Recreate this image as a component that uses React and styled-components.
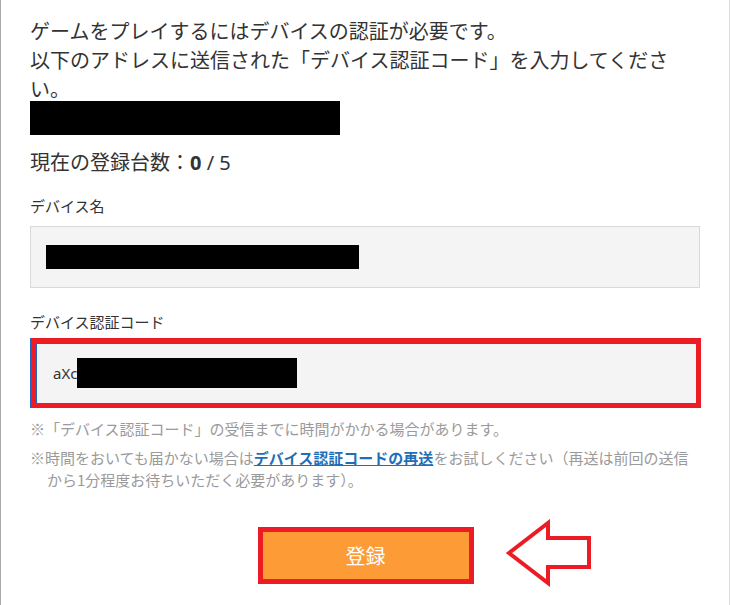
import styled, { createGlobalStyle } from "styled-components";

const GlobalStyle = createGlobalStyle`
    body {
        margin: 0;
        background: #fff;
        font-family: "Noto Sans CJK JP", "Noto Sans", sans-serif;
        color: #333;
    }
`;

const Ventana = styled.div`
    width: 730px;
    height: 605px;
    box-sizing: border-box;
    border-left: 1px solid #a9a9a9;
    border-right: 1px solid #dedede;
    padding: 16px 29px 0 29px;
    overflow: hidden;
`;

const Mensaje = styled.p`
    margin: 0;
    width: 655px;
    font-size: 20px;
    line-height: 29px;
    color: #333;
`;

const Tachado = styled.div`
    width: ${props => props.ancho}px;
    height: ${props => props.alto}px;
    background: #000;
    margin-top: ${props => props.arriba || 0}px;
    flex-shrink: 0;
`;

const Contador = styled.p`
    margin: 12px 0 0;
    font-size: 20px;
    line-height: 29px;
    color: #333;

    b {
        font-family: "Noto Sans", sans-serif;
        font-weight: 700;
    }
    span {
        font-family: "Noto Sans", sans-serif;
    }
`;

const Etiqueta = styled.label`
    display: block;
    font-size: 15px;
    line-height: 22px;
    color: #333;
    margin-top: ${props => props.arriba}px;
`;

const Campo = styled.div`
    box-sizing: border-box;
    display: flex;
    align-items: center;
    background: #f4f4f4;
    margin-top: ${props => props.arriba}px;
    height: ${props => props.resaltado ? 70 : 62}px;
    padding-left: ${props => props.resaltado ? 17 : 15}px;
    border: ${props => props.resaltado ? '5px solid #ed1c24' : '1px solid #d9d9d9'};
    box-shadow: ${props => props.resaltado ? 'inset 1px 1px 0 #1e64c8, -1px 0 0 #1e64c8' : 'none'};
    margin-left: ${props => props.resaltado ? 1 : 0}px;
    margin-right: ${props => props.resaltado ? -1 : 0}px;
    font-family: "Noto Sans", sans-serif;
    font-size: 15px;
    color: #333;
`;

const Notas = styled.div`
    margin-top: 10px;
    display: flex;
    flex-direction: column;
    gap: 7px;
`;

const Nota = styled.p`
    margin: 0;
    font-size: 15px;
    line-height: 22px;
    color: #9a9a9a;
    padding-left: 17px;
    text-indent: -17px;

    a {
        color: #1f6fb8;
        font-weight: 700;
        text-decoration: underline;
    }
`;

const FilaBoton = styled.div`
    display: flex;
    justify-content: center;
    margin-top: 36px;
    padding-left: 1px;
`;

const ContenedorBoton = styled.div`
    position: relative;
`;

const Boton = styled.button`
    box-sizing: border-box;
    width: 216px;
    height: 57px;
    background: #fd9b37;
    border: 5px solid #ed1c24;
    color: #fff;
    font-family: "Noto Sans CJK JP", sans-serif;
    font-size: 20px;
    padding: 0;
    cursor: pointer;
`;

const Flecha = styled.svg`
    position: absolute;
    left: 247px;
    top: -8px;
`;

export default function App() {
    return (
        <>
            <GlobalStyle />
            <Ventana>
                <Mensaje>
                    ゲームをプレイするにはデバイスの認証が必要です。<br />
                    以下のアドレスに送信された「デバイス認証コード」を入力してください。
                </Mensaje>
                <Tachado ancho={310} alto={34} arriba={-2} />

                <Contador>現在の登録台数：<b>0</b><span> / 5</span></Contador>

                <Etiqueta arriba={18}>デバイス名</Etiqueta>
                <Campo arriba={9}>
                    <Tachado ancho={313} alto={24} />
                </Campo>

                <Etiqueta arriba={23}>デバイス認証コード</Etiqueta>
                <Campo arriba={5} resaltado>
                    aXc<Tachado ancho={220} alto={30} />
                </Campo>

                <Notas>
                    <Nota>※「デバイス認証コード」の受信までに時間がかかる場合があります。</Nota>
                    <Nota>
                        ※時間をおいても届かない場合は<a href="#">デバイス認証コードの再送</a>をお試しください（再送は前回の送信から1分程度お待ちいただく必要があります）。
                    </Nota>
                </Notas>

                <FilaBoton>
                    <ContenedorBoton>
                        <Boton>登録</Boton>
                        <Flecha width="90" height="68" viewBox="0 0 90 68">
                            <polygon
                                points="4,34 43,4 43,19 84,19 84,48 43,48 43,64"
                                fill="#fff"
                                stroke="#ed1c24"
                                strokeWidth="4"
                                strokeLinejoin="miter"
                            />
                        </Flecha>
                    </ContenedorBoton>
                </FilaBoton>
            </Ventana>
        </>
    );
}
